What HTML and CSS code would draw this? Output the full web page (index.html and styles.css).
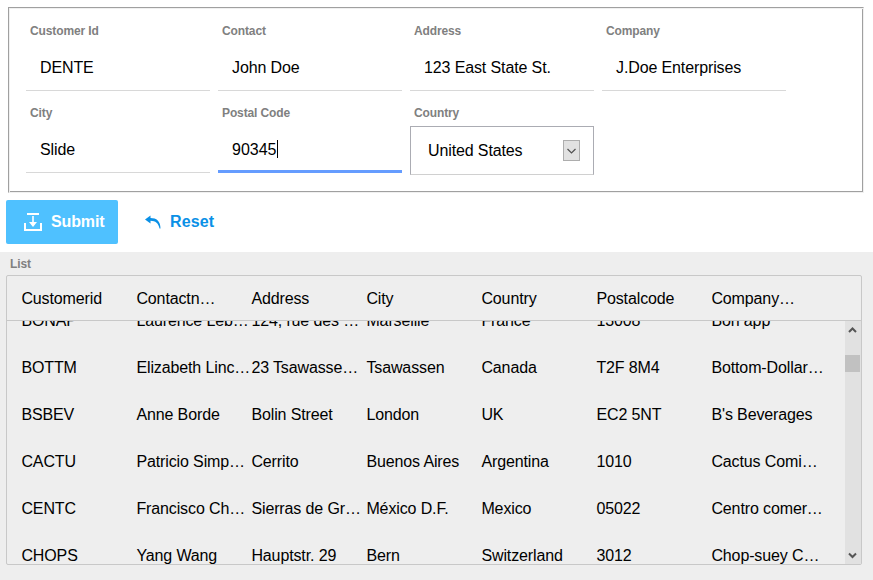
FILE: index.html
```html
<!DOCTYPE html>
<html lang="en">
<head>
<meta charset="utf-8">
<title>Customers</title>
<link rel="stylesheet" href="styles.css">
</head>
<body>
<form class="panel">
  <div class="field"><label>Customer Id</label><div class="value">DENTE</div></div>
  <div class="field"><label>Contact</label><div class="value">John Doe</div></div>
  <div class="field"><label>Address</label><div class="value">123 East State St.</div></div>
  <div class="field"><label>Company</label><div class="value">J.Doe Enterprises</div></div>
  <div class="field"><label>City</label><div class="value">Slide</div></div>
  <div class="field"><label>Postal Code</label><div class="value focused">90345<span class="caret"></span></div></div>
  <div class="field"><label>Country</label><div class="select"><span>United States</span><span class="arrow"><svg width="15" height="19" viewBox="0 0 15 19"><path d="M3.500 8l4 4 4-4" fill="none" stroke="#505050" stroke-width="1.2"/></svg></span></div></div>
</form>
<div class="actions">
  <div class="btn submit"><svg width="18" height="18" viewBox="0 0 18 18"><path d="M3 1h12M1 10V17h16v-7" fill="none" stroke="#fff" stroke-width="2"/><path d="M8.200 3h1.600v6H13l-4 5-4-5h3.200z" fill="#fff"/></svg><span>Submit</span></div>
  <div class="btn reset"><svg width="16" height="14" viewBox="0 0 16 14"><path d="M0 4.500L5.500.5V3c6 0 10 3 10 10.500h-1C13.500 8.500 10.500 5.800 5.500 5.800V8.500z" fill="#0a90e6"/></svg><span>Reset</span></div>
</div>
<section class="list">
  <div class="title">List</div>
  <div class="table">
    <div class="row head"><span>Customerid</span><span>Contactn…</span><span>Address</span><span>City</span><span>Country</span><span>Postalcode</span><span>Company…</span></div>
    <div class="body">
      <div class="rows">
        <div class="row"><span>BONAP</span><span>Laurence Leb…</span><span>124, rue des …</span><span>Marseille</span><span>France</span><span>13008</span><span>Bon app</span></div>
        <div class="row"><span>BOTTM</span><span>Elizabeth Linc…</span><span>23 Tsawasse…</span><span>Tsawassen</span><span>Canada</span><span>T2F 8M4</span><span>Bottom-Dollar…</span></div>
        <div class="row"><span>BSBEV</span><span>Anne Borde</span><span>Bolin Street</span><span>London</span><span>UK</span><span>EC2 5NT</span><span>B's Beverages</span></div>
        <div class="row"><span>CACTU</span><span>Patricio Simp…</span><span>Cerrito</span><span>Buenos Aires</span><span>Argentina</span><span>1010</span><span>Cactus Comi…</span></div>
        <div class="row"><span>CENTC</span><span>Francisco Ch…</span><span>Sierras de Gr…</span><span>México D.F.</span><span>Mexico</span><span>05022</span><span>Centro comer…</span></div>
        <div class="row"><span>CHOPS</span><span>Yang Wang</span><span>Hauptstr. 29</span><span>Bern</span><span>Switzerland</span><span>3012</span><span>Chop-suey C…</span></div>
      </div>
      <div class="scrollbar">
        <svg width="15" height="17" viewBox="0 0 15 17"><path d="M4 11l3.500-3.500L11 11" fill="none" stroke="#555" stroke-width="2"/></svg>
        <div class="thumb"></div>
        <svg class="down" width="15" height="17" viewBox="0 0 15 17"><path d="M4 6.500l3.500 3.500L11 6.500" fill="none" stroke="#555" stroke-width="2"/></svg>
      </div>
    </div>
  </div>
</section>
</body>
</html>
```
FILE: styles.css
```css
* { box-sizing: border-box; }
body {
  margin: 0;
  height: 580px;
  overflow: hidden;
  display: flex;
  flex-direction: column;
  background: #fff;
  color: #000;
  font: 16px/20px "Liberation Sans", sans-serif;
  letter-spacing: -0.12px;
}
svg { display: block; flex: none; }
.panel {
  width: 856px;
  height: 186px;
  margin: 7px 0 0 8px;
  padding: 13px 17px 0;
  border: 1px solid;
  border-color: #a0a0a0 #f0f0f0 #f0f0f0 #a0a0a0;
  box-shadow: inset 1px 1px #f0f0f0, inset -1px -1px #a0a0a0;
  display: grid;
  grid-template-columns: repeat(4, 184px);
  grid-auto-rows: 70px;
  gap: 12px 8px;
  align-content: start;
}
.field label {
  display: block;
  height: 21px;
  padding: 2px 4px 0;
  font: bold 12px/16px "Liberation Sans", sans-serif;
  color: #808080;
}
.value {
  height: 49px;
  padding: 16px 14px 0;
  border-bottom: 1px solid #d8d8d8;
  display: flex;
}
.value.focused { border-bottom: 3px solid #659cff; letter-spacing: 0; }
.caret { width: 1px; height: 18px; background: #000; }
.select {
  height: 49px;
  margin-top: 2px;
  padding: 0 13px 0 17px;
  border: 1px solid #abacb3;
  border-bottom-color: #d0d0d0;
  display: flex;
  align-items: center;
  justify-content: space-between;
}
.arrow {
  width: 17px;
  height: 21px;
  border: 1px solid #adadad;
  background: #e1e1e1;
  overflow: hidden;
}
.actions {
  height: 59px;
  padding: 7px 6px 0;
  display: flex;
}
.btn {
  height: 44px;
  display: flex;
  align-items: center;
  font-weight: bold;
}
.submit {
  width: 112px;
  padding-left: 18px;
  gap: 9px;
  border-radius: 2px;
  background: #4fc1ff;
  color: #fff;
}
.reset {
  padding-left: 27px;
  gap: 9px;
  color: #0a90e6;
  letter-spacing: 0.1px;
}
.list {
  flex: 1;
  padding: 4px 0 0 6px;
  background: #eee;
}
.title {
  height: 19px;
  padding-left: 4px;
  font: bold 12px/16px "Liberation Sans", sans-serif;
  color: #808080;
}
.table {
  width: 856px;
  height: 290px;
  border: 1px solid #c8c8c8;
  border-radius: 2px;
}
.row {
  height: 47px;
  padding-left: 14.4px;
  display: grid;
  grid-template-columns: repeat(7, 115px);
  align-items: center;
  white-space: nowrap;
}
.head {
  height: 45px;
  padding-top: 2px;
  border-bottom: 1px solid #c8c8c8;
}
.body {
  height: 243px;
  display: flex;
  justify-content: space-between;
  overflow: hidden;
}
.rows { margin-top: -24px; }
.scrollbar {
  width: 16px;
  background: #e1e1e1;
  display: flex;
  flex-direction: column;
}
.thumb { height: 17px; margin-top: 17px; width: 15px; background: #c1c1c1; }
.down { margin-top: auto; }
```
